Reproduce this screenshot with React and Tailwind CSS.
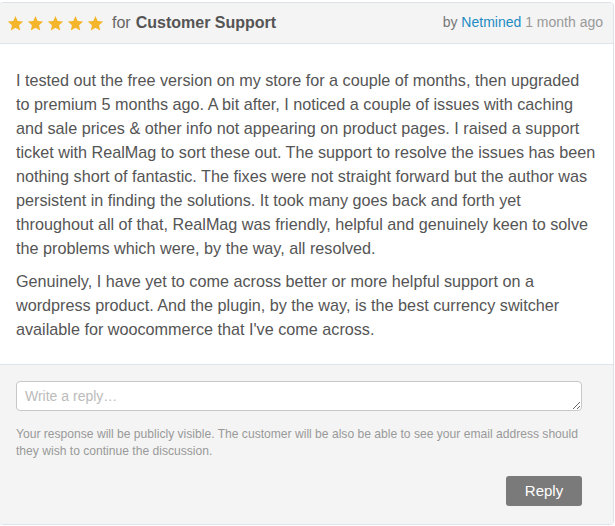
import React from 'react';

const para1 = [
  'I tested out the free version on my store for a couple of months, then upgraded',
  'to premium 5 months ago. A bit after, I noticed a couple of issues with caching',
  'and sale prices & other info not appearing on product pages. I raised a support',
  'ticket with RealMag to sort these out. The support to resolve the issues has been',
  'nothing short of fantastic. The fixes were not straight forward but the author was',
  'persistent in finding the solutions. It took many goes back and forth yet',
  'throughout all of that, RealMag was friendly, helpful and genuinely keen to solve',
  'the problems which were, by the way, all resolved.',
];

const para2 = [
  'Genuinely, I have yet to come across better or more helpful support on a',
  'wordpress product. And the plugin, by the way, is the best currency switcher',
  "available for woocommerce that I've come across.",
];

function Star() {
  return (
    <svg width="17" height="17" viewBox="0 0 24 24" className="fill-[#f4b52b]">
      <path d="M12 1.5l3.1 7.1 7.7.7-5.8 5.1 1.7 7.6L12 18l-6.7 4 1.7-7.6L1.2 9.3l7.7-.7z" />
    </svg>
  );
}

export default function App() {
  return (
    <div className="bg-white min-h-screen pt-[2px] font-['Liberation_Sans',Arial,sans-serif]">
      <div className="-ml-px w-[615px] border border-[#dde3e9] rounded-[4px] overflow-hidden">
        {/* header */}
        <div className="h-[41px] bg-[#f4f4f4] border-b border-[#dde3e9] flex items-center justify-between pl-[7px] pr-[10px]">
          <div className="flex items-center">
            <div className="flex gap-[3px]">
              <Star /><Star /><Star /><Star /><Star />
            </div>
            <span className="ml-[8px] text-[16px] text-[#666]">for</span>
            <span className="ml-[5px] text-[16px] font-bold text-[#555]">Customer Support</span>
          </div>
          <div className="text-[14px] text-[#777] -mt-[2px]">
            by <span className="text-[#1e8cc4]">Netmined</span> <span className="text-[#999]">1 month ago</span>
          </div>
        </div>

        {/* body */}
        <div className="bg-white px-[16px] pt-[24px] pb-[23px] text-[16.2px] leading-[24px] text-[#555] whitespace-nowrap">
          <p>
            {para1.map((l, i) => <span key={i} className="block">{l}</span>)}
          </p>
          <p className="mt-[9px]">
            {para2.map((l, i) => <span key={i} className="block">{l}</span>)}
          </p>
        </div>

        {/* reply */}
        <div className="bg-[#f4f4f4] border-t border-[#dde3e9] px-[16px] pt-[16px] pb-[18px]">
          <textarea
            rows={1}
            placeholder="Write a reply…"
            className="block w-[566px] h-[30px] bg-white border border-[#c8c8c8] rounded-[4px] px-[8px] py-[4px] text-[14px] leading-[20px] text-[#555] placeholder:text-[#bbb] outline-none"
          />
          <p className="mt-[15px] w-[570px] text-[12.1px] leading-[17px] text-[#999]">
            Your response will be publicly visible. The customer will be also be able to see your email address should they wish to continue the discussion.
          </p>
          <div className="flex justify-end w-[566px] mt-[16px]">
            <button className="w-[76px] h-[30px] bg-[#7a7a7a] rounded-[3px] text-white text-[15px]">
              Reply
            </button>
          </div>
        </div>
      </div>
    </div>
  );
}
